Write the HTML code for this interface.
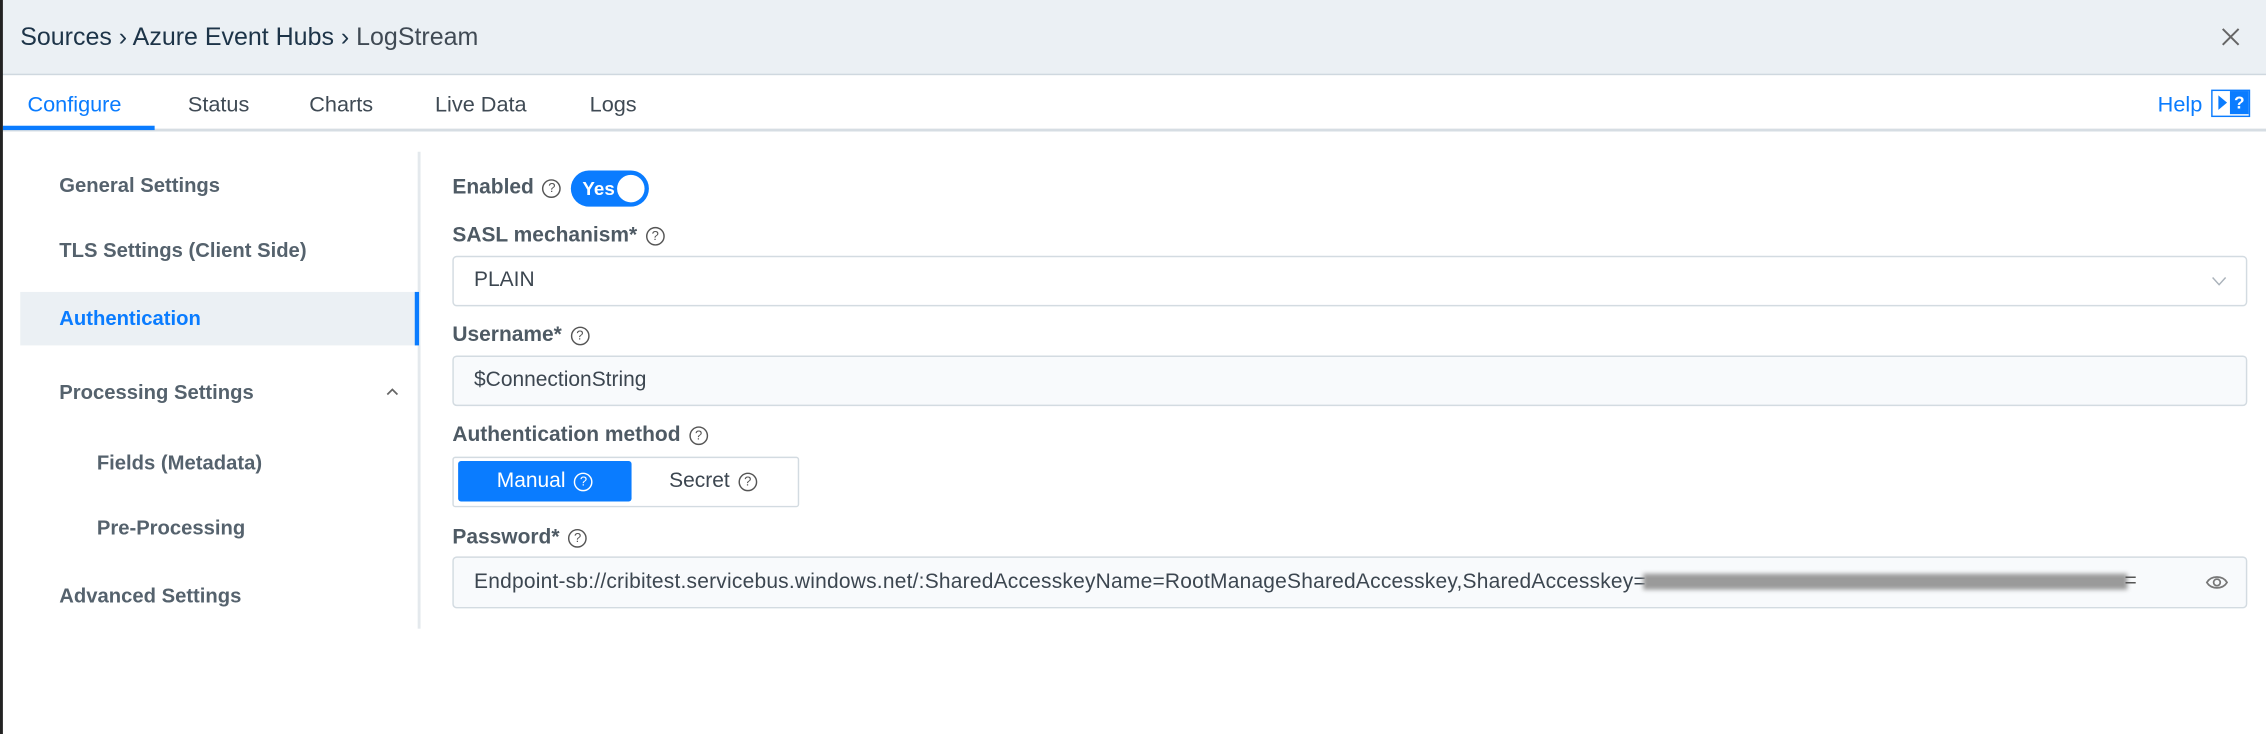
<!DOCTYPE html>
<html><head><meta charset="utf-8"><style>
html,body{margin:0;padding:0;width:2266px;height:734px;overflow:hidden;background:#fff}
#w{position:absolute;left:0;top:0;width:1568px;height:508px;transform:scale(1.4452);transform-origin:0 0;font-family:"Liberation Sans",sans-serif;color:#4a5560}
.a{position:absolute;white-space:nowrap}
.hdr{left:0;top:0;width:1568px;height:51px;background:#ebf0f4;border-bottom:1px solid #cfd8df}
.tabs{left:0;top:52px;width:1568px;height:37px;border-bottom:2px solid #d6dde3}
.tab{top:64px;font-size:15px;color:#3f4a54}
.side{font-size:14px;font-weight:bold;color:#55626d;left:41px}
.lbl{font-size:14.5px;font-weight:bold;color:#4e5a64;left:313px}
.q{display:inline-block;width:11px;height:11px;border:1.3px solid #555;border-radius:50%;font-size:9px;line-height:11px;text-align:center;font-weight:normal;color:#555;vertical-align:1px;margin-left:6px}
.box{left:313px;width:1242px;border:1.5px solid #d3dbe1;border-radius:3px;font-size:14.5px;color:#3c4650;box-sizing:border-box;padding-left:14px}
</style></head><body><div id="w">
<div class="a" style="left:0;top:0;width:1.5px;height:508px;background:#222;z-index:5"></div>
<div class="a hdr"></div>
<div class="a" style="left:14px;top:15px;font-size:17.3px;color:#1d3448">Sources › Azure Event Hubs › <span style="color:#404a54">LogStream</span></div>
<svg class="a" style="left:1537px;top:19px" width="13" height="13" viewBox="0 0 13 13"><path d="M1 1L12 12M12 1L1 12" stroke="#666" stroke-width="1.4"/></svg>
<div class="a tabs"></div>
<div class="a tab" style="left:19px;color:#0a7cff">Configure</div>
<div class="a" style="left:2px;top:87px;width:105px;height:3px;background:#0a7cff"></div>
<div class="a tab" style="left:130px">Status</div>
<div class="a tab" style="left:214px">Charts</div>
<div class="a tab" style="left:301px">Live Data</div>
<div class="a tab" style="left:408px">Logs</div>
<div class="a" style="left:1493px;top:64px;font-size:15px;color:#0a7cff">Help</div>
<div class="a" style="left:1530px;top:62px;width:27px;height:19px;border:1.5px solid #0a7cff;box-sizing:border-box"><div class="a" style="left:12px;top:0;width:13px;height:16px;background:#0a7cff;color:#fff;font-size:12px;font-weight:bold;text-align:center;line-height:16px">?</div><div class="a" style="left:4px;top:3px;width:0;height:0;border-left:6px solid #0a7cff;border-top:5px solid transparent;border-bottom:5px solid transparent"></div></div>

<div class="a" style="left:289px;top:105px;width:2px;height:330px;background:#e4e9ed"></div>
<div class="a" style="left:14px;top:202px;width:277px;height:37px;background:#ebf0f4"></div>
<div class="a" style="left:287px;top:202px;width:3px;height:37px;background:#0a7cff"></div>
<div class="a side" style="top:120px">General Settings</div>
<div class="a side" style="top:165px">TLS Settings (Client Side)</div>
<div class="a side" style="top:212px;color:#0a7cff">Authentication</div>
<div class="a side" style="top:263px">Processing Settings</div>
<svg class="a" style="left:267px;top:268px" width="9" height="6" viewBox="0 0 9 6"><path d="M1 5L4.5 1.5L8 5" fill="none" stroke="#666" stroke-width="1.2"/></svg>
<div class="a side" style="top:312px;left:67px">Fields (Metadata)</div>
<div class="a side" style="top:357px;left:67px">Pre-Processing</div>
<div class="a side" style="top:404px">Advanced Settings</div>

<div class="a lbl" style="top:122px">Enabled<span class="q">?</span></div>
<div class="a" style="left:395px;top:118px;width:54px;height:25px;border-radius:13px;background:#0a7cff"><div class="a" style="left:8px;top:5px;color:#fff;font-size:13px;font-weight:bold">Yes</div><div class="a" style="left:32px;top:3px;width:19px;height:19px;border-radius:50%;background:#fff"></div></div>
<div class="a lbl" style="top:155px">SASL mechanism*<span class="q">?</span></div>
<div class="a box" style="top:177px;height:35px;line-height:33px">PLAIN</div>
<svg class="a" style="left:1530px;top:191px" width="11" height="7" viewBox="0 0 11 7"><path d="M1 1L5.5 6L10 1" fill="none" stroke="#aab2ba" stroke-width="1"/></svg>
<div class="a lbl" style="top:224px">Username*<span class="q">?</span></div>
<div class="a box" style="top:246px;height:35px;line-height:33px;background:#f8fafc">$ConnectionString</div>
<div class="a lbl" style="top:293px">Authentication method<span class="q">?</span></div>
<div class="a" style="left:313px;top:316px;width:240px;height:35px;border:1.5px solid #d3dbe1;box-sizing:border-box;border-radius:2px"></div>
<div class="a" style="left:317px;top:319px;width:120px;height:28px;background:#0a7cff;border-radius:2px;color:#fff;font-size:14.5px;line-height:28px;text-align:center">Manual<span class="q" style="border-color:#fff;color:#fff">?</span></div>
<div class="a" style="left:463px;top:325px;font-size:14.5px;color:#3c4650">Secret<span class="q">?</span></div>
<div class="a lbl" style="top:364px">Password*<span class="q">?</span></div>
<div class="a box" style="top:385px;height:36px;line-height:34px;background:#f8fafc;font-size:14.5px;letter-spacing:0.15px">Endpoint-sb://cribitest.servicebus.windows.net/:SharedAccesskeyName=RootManageSharedAccesskey,SharedAccesskey=</div>
<div class="a" style="left:1137px;top:397px;width:335px;height:11px;background:#9a9a9a;filter:blur(1.5px)"></div>
<div class="a" style="left:1470px;top:394px;font-size:14.5px;color:#555">=</div>
<svg class="a" style="left:1526px;top:397px" width="16" height="12" viewBox="0 0 16 12"><path d="M1 6C4 1 12 1 15 6C12 11 4 11 1 6Z" fill="none" stroke="#777" stroke-width="1.2"/><circle cx="8" cy="6" r="2.3" fill="none" stroke="#777" stroke-width="1.2"/></svg>
</div></body></html>
